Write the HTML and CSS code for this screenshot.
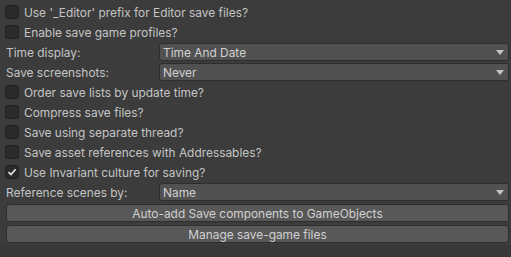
FILE: index.html
```html
<!DOCTYPE html>
<html>
<head>
<meta charset="utf-8">
<link rel="stylesheet" href="styles.css">
</head>
<body>
<div class="panel">
  <div class="row"><span class="check"></span><span class="label">Use '_Editor' prefix for Editor save files?</span></div>
  <div class="row"><span class="check"></span><span class="label">Enable save game profiles?</span></div>
  <div class="row field"><span class="flabel">Time display:</span><div class="drop"><span>Time And Date</span><span class="arrow"></span></div></div>
  <div class="row field"><span class="flabel">Save screenshots:</span><div class="drop"><span>Never</span><span class="arrow"></span></div></div>
  <div class="row"><span class="check"></span><span class="label">Order save lists by update time?</span></div>
  <div class="row"><span class="check"></span><span class="label">Compress save files?</span></div>
  <div class="row"><span class="check"></span><span class="label">Save using separate thread?</span></div>
  <div class="row"><span class="check"></span><span class="label">Save asset references with Addressables?</span></div>
  <div class="row"><span class="check on"><svg width="10" height="10" viewBox="0 0 10 10"><path d="M1.5 5.2 L4 7.6 L8.6 2.2" fill="none" stroke="#e8e8e8" stroke-width="1.6"/></svg></span><span class="label">Use Invariant culture for saving?</span></div>
  <div class="row field"><span class="flabel">Reference scenes by:</span><div class="drop"><span>Name</span><span class="arrow"></span></div></div>
  <div class="btn first">Auto-add Save components to GameObjects</div>
  <div class="btn">Manage save-game files</div>
</div>
</body>
</html>
```
FILE: styles.css
```css
html, body {
  margin: 0;
  padding: 0;
}
body {
  background: #383838;
  width: 511px;
  height: 257px;
  overflow: hidden;
  font-family: Inter, "Noto Sans", sans-serif;
  font-size: 11.9px;
  color: #c4c4c4;
}
.panel {
  background: #3c3c3c;
  padding: 2px 2px 2px 5px;
}
.row {
  height: 20px;
  display: flex;
  align-items: center;
}
.check {
  width: 12px;
  height: 12px;
  background: #2a2a2a;
  border: 1px solid #212121;
  border-radius: 2px;
  display: flex;
  align-items: center;
  justify-content: center;
  flex: none;
}
.label {
  margin-left: 5px;
  white-space: nowrap;
}
.flabel {
  width: 153px;
  padding-left: 1px;
  flex: none;
}
.drop {
  flex: 1;
  height: 16px;
  background: #515151;
  border: 1px solid #2e2e2e;
  border-radius: 3px;
  display: flex;
  align-items: center;
  justify-content: space-between;
  padding: 0 4px 0 3px;
  color: #d0d0d0;
}
.arrow {
  width: 0;
  height: 0;
  border-left: 4px solid transparent;
  border-right: 4px solid transparent;
  border-top: 5px solid #c4c4c4;
}
.btn {
  height: 16px;
  background: #585858;
  border: 1px solid #2e2e2e;
  border-radius: 3px;
  margin-left: 1px;
  display: flex;
  align-items: center;
  justify-content: center;
  color: #d0d0d0;
}
.btn.first {
  margin-top: 2px;
  margin-bottom: 3px;
}
```
